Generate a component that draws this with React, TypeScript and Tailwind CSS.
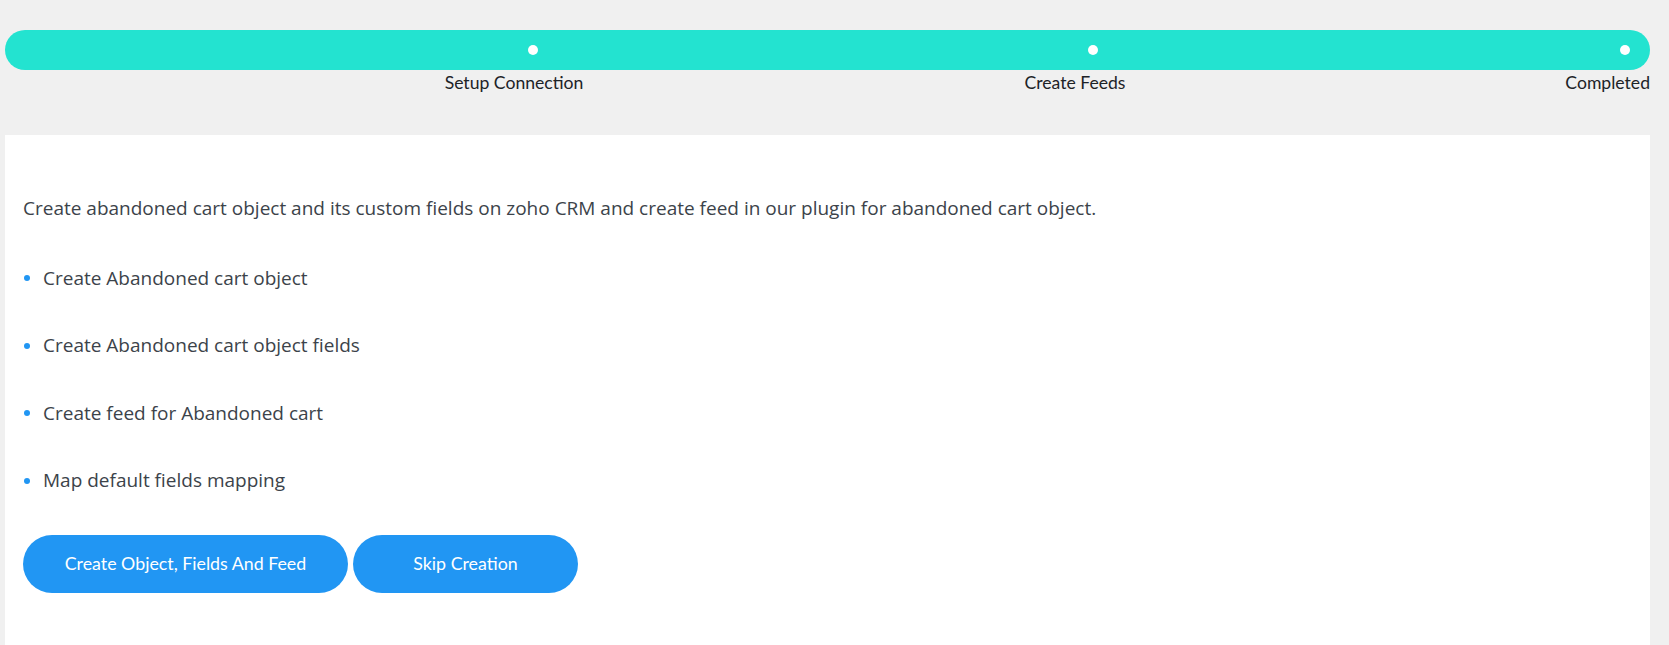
// Onboarding step — abandoned cart setup

import React from 'react';

const steps = [
  { label: 'Setup Connection' },
  { label: 'Create Feeds' },
  { label: 'Completed' },
];

const tasks = [
  'Create Abandoned cart object',
  'Create Abandoned cart object fields',
  'Create feed for Abandoned cart',
  'Map default fields mapping',
];

function Stepper() {
  return (
    <div className="pt-[30px] pl-[5px] w-[1650px]">
      {/* progress bar */}
      <div className="flex items-center h-[40px] w-[1645px] rounded-full bg-[#23e3d0]">
        <span className="ml-[523px] w-[10px] h-[10px] rounded-full bg-white" />
        <span className="ml-[550px] w-[10px] h-[10px] rounded-full bg-white" />
        <span className="ml-[522px] w-[10px] h-[10px] rounded-full bg-white" />
      </div>

      {/* labels */}
      <div className="flex w-[1645px] pt-[1px] text-[17.6px] leading-6 text-[#1d2327]">
        <div className="ml-[409px] w-[200px] text-center">{steps[0].label}</div>
        <div className="ml-[361px] w-[200px] text-center">{steps[1].label}</div>
        <div className="ml-auto text-right">{steps[2].label}</div>
      </div>
    </div>
  );
}

export default function App() {
  return (
    <div
      className="h-[645px] overflow-hidden bg-[#f0f0f0] flex flex-col"
      style={{ fontFamily: 'Lato, "Open Sans", sans-serif' }}
    >
      <Stepper />

      <div className="mt-[40px] ml-[5px] w-[1645px] flex-1 bg-white pl-[18px] pt-[61px] font-['Open_Sans',sans-serif]">
        <p className="text-[19px] leading-6 text-[#3c434a]">
          Create abandoned cart object and its custom fields on zoho CRM and create feed in our plugin for abandoned cart object.
        </p>

        <ul className="mt-[46px] flex flex-col gap-[43.5px]">
          {tasks.map(t => (
            <li key={t} className="flex items-center h-6 text-[19px] text-[#3c434a]">
              <span className="ml-[1px] w-[6px] h-[6px] rounded-full bg-[#2196f3]" />
              <span className="ml-[13px]">{t}</span>
            </li>
          ))}
        </ul>

        <div className="mt-[42px] flex gap-[5px] font-['Lato',sans-serif]">
          <button className="h-[58px] w-[325px] rounded-full bg-[#2196f3] text-white text-[17.8px]">
            Create Object, Fields And Feed
          </button>
          <button className="h-[58px] w-[225px] rounded-full bg-[#2196f3] text-white text-[17.8px]">
            Skip Creation
          </button>
        </div>
      </div>
    </div>
  );
}
